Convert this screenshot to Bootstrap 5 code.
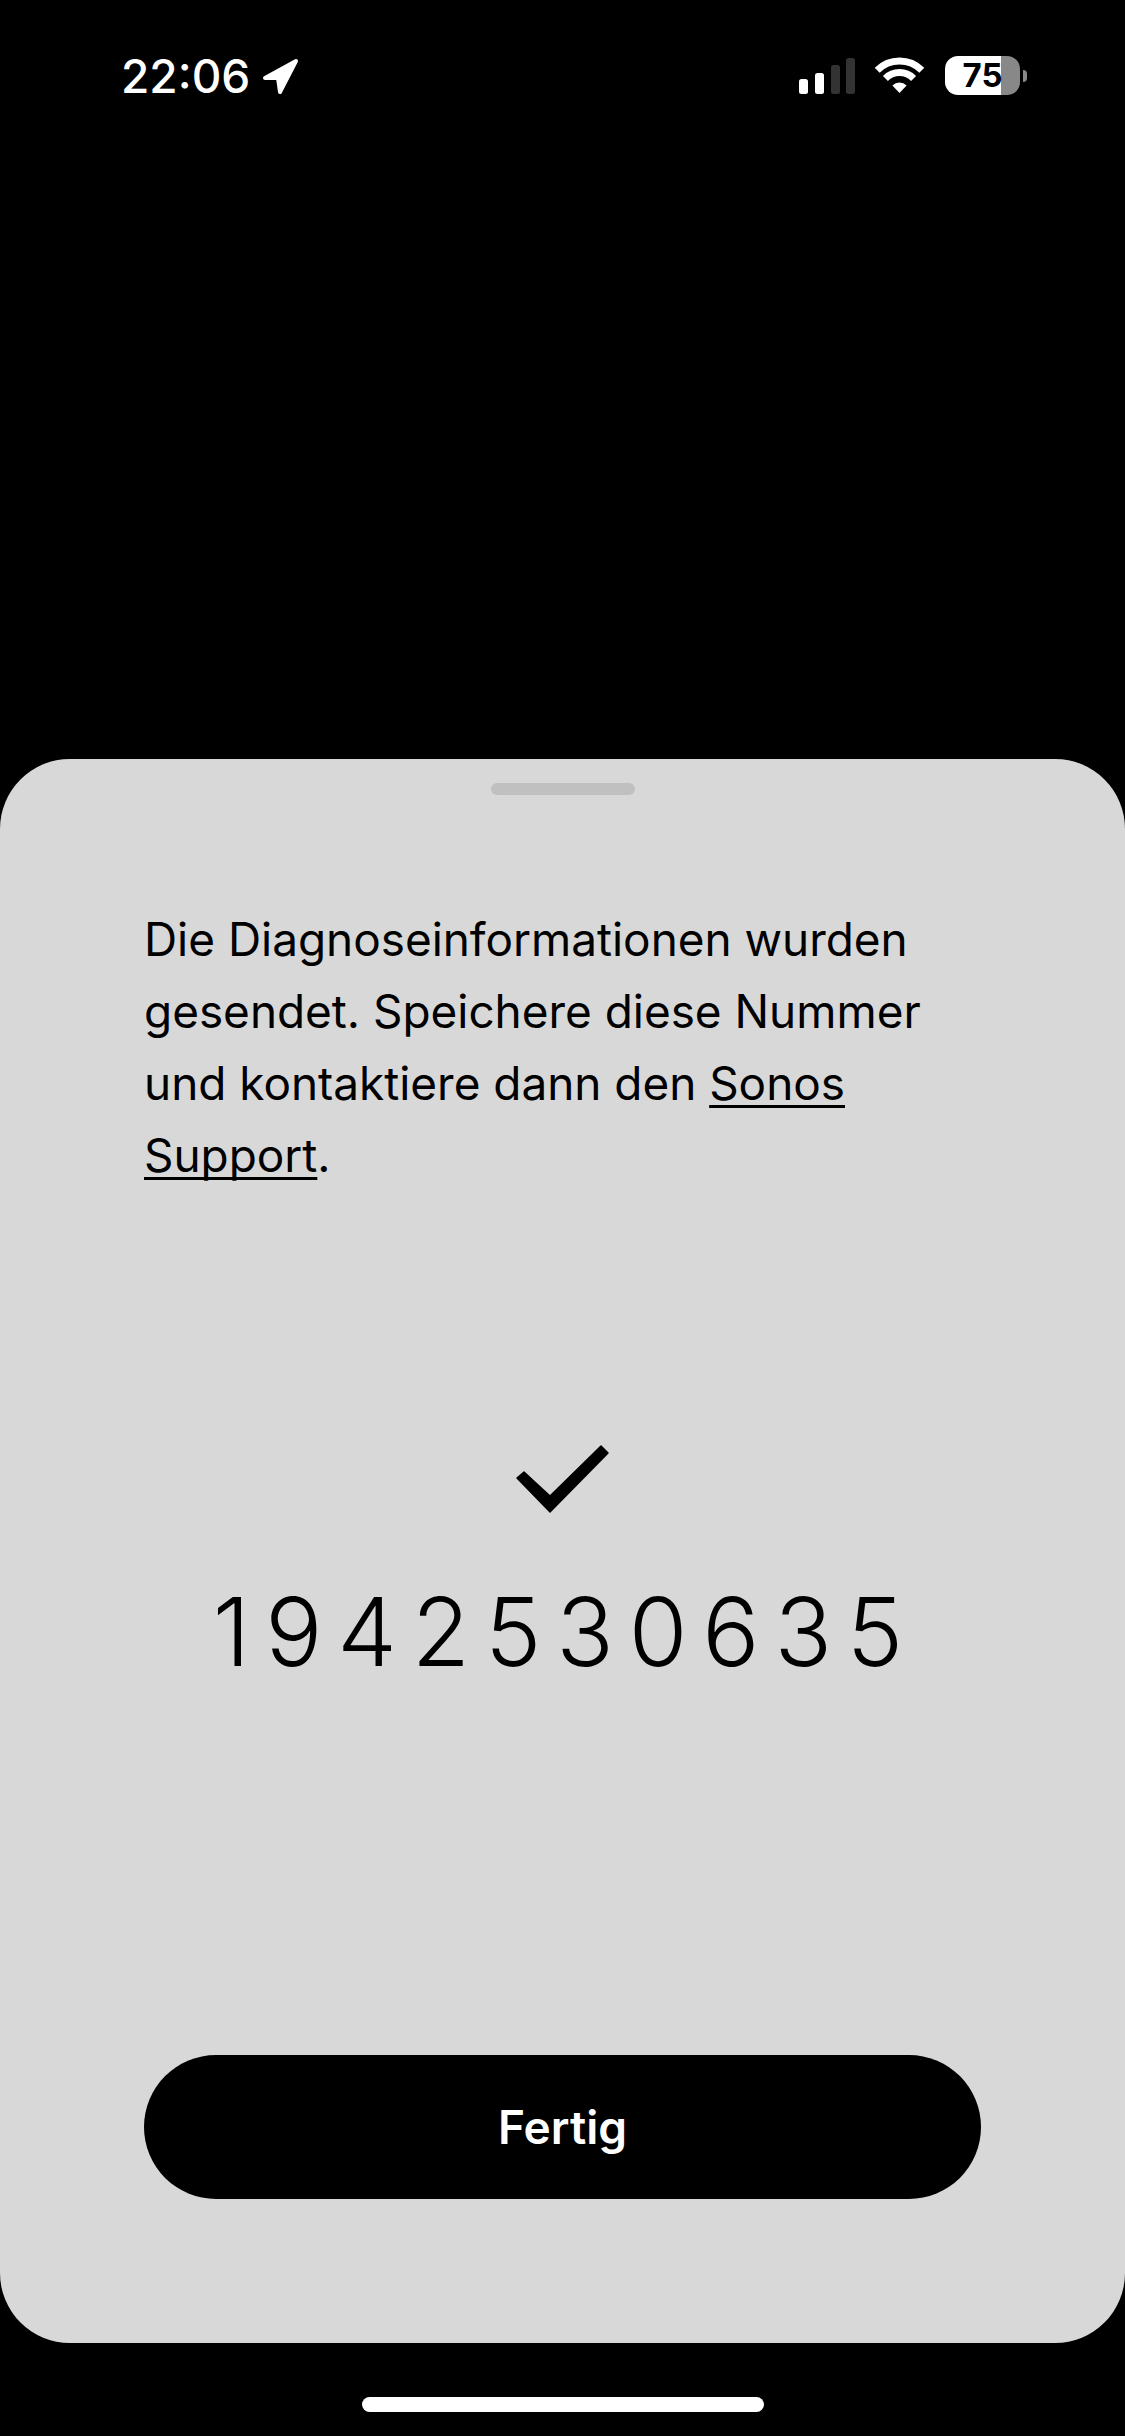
<!DOCTYPE html>
<html lang="de">
<head>
<meta charset="utf-8">
<title>Fertig</title>
<link href="https://cdn.jsdelivr.net/npm/bootstrap@5.3.0/dist/css/bootstrap.min.css" rel="stylesheet">
<style>
html,body{height:2436px;width:1125px;margin:0;overflow:hidden;background:#000;font-family:Inter,"Liberation Sans",sans-serif;}
.screen-wrap{height:2436px;}
.status-row{height:118px;padding:0 98px 0 121px;color:#fff;}
.clock{font-size:46px;font-weight:500;line-height:1;margin-top:53px;}
.loc-ico{margin-left:12px;margin-top:58px;}
.status-right{margin-top:56px;}
.sig-ico{margin-right:18px;margin-top:2px;}
.wifi-ico{margin-right:19px;}
.batt{width:75px;height:39px;border-radius:13px;background:linear-gradient(to right,#fff 0,#fff 56px,#888 56px,#888 100%);color:#000;font-size:33px;font-weight:700;line-height:39px;}
.batt-nub{width:4px;height:12px;background:#888;border-radius:0 6px 6px 0;margin-left:3px;}
.sheet-panel{height:1584px;background:#d8d8d8;border-radius:70px;padding:24px 144px 144px 144px;color:#000;}
.grab{width:144px;height:12px;border-radius:6px;background:#c0c0c0;margin:0 auto 109px;}
.intro{font-size:45.9px;line-height:72px;font-weight:400;margin:0 0 248px;}
.intro a{color:#000;text-decoration:underline;text-decoration-thickness:3px;text-underline-offset:5px;text-decoration-skip-ink:none;}
.tick{display:block;margin:0 auto 56px;}
.code-num{font-size:95px;line-height:112px;letter-spacing:14.9px;font-weight:360;text-align:center;white-space:nowrap;padding-left:6px;}
.done-btn{height:144px;width:837px;border-radius:72px;background:#000;color:#fff;font-size:46px;font-weight:600;border:0;}
.done-btn:hover,.done-btn:active{background:#000!important;color:#fff!important;}
.home-bar{width:402px;height:15px;background:#fff;border-radius:8px;margin:54px auto 24px;}
</style>
</head>
<body>
<div class="screen-wrap d-flex flex-column">
  <div class="status-row d-flex justify-content-between align-items-start">
    <div class="d-flex align-items-start">
      <span class="clock">22:06</span>
      <svg class="loc-ico" width="37" height="37" viewBox="0 0 37 37"><path d="M3 20 L34 3 L18 34 L16 20 Z" fill="#fff" stroke="#fff" stroke-width="4" stroke-linejoin="round"/></svg>
    </div>
    <div class="status-right d-flex align-items-start">
      <svg class="sig-ico" width="57" height="36" viewBox="0 0 57 36"><rect x="0" y="21" width="9" height="15" rx="2.5" fill="#fff"/><rect x="16" y="15" width="9" height="21" rx="2.5" fill="#fff"/><rect x="32" y="7" width="9" height="29" rx="2.5" fill="#333"/><rect x="47" y="0" width="9" height="36" rx="2.5" fill="#333"/></svg>
      <svg class="wifi-ico" width="52" height="38" viewBox="0 0 52 38" fill="none" stroke="#fff" stroke-width="7"><path d="M3.2 14.2A31.5 31.5 0 0 1 47.8 14.2"/><path d="M11.4 22.4A20 20 0 0 1 39.6 22.4"/><path d="M18.4 29.4A10 10 0 0 1 32.6 29.4L25.5 37Z" fill="#fff" stroke="none"/></svg>
      <div class="batt text-center">75</div>
      <div class="batt-nub align-self-center"></div>
    </div>
  </div>
  <div class="flex-grow-1"></div>
  <div class="sheet-panel d-flex flex-column">
    <div class="grab"></div>
    <p class="intro">Die Diagnoseinformationen wurden gesendet. Speichere diese Nummer und kontaktiere dann den <a href="#">Sonos</a> <a href="#">Support</a>.</p>
    <svg class="tick" width="105" height="80" viewBox="0 0 105 80"><path d="M7 38 14 32 40 56 91 6 98 13 40 72Z" fill="#000" stroke="#000" stroke-width="1.5" stroke-linejoin="round"/></svg>
    <div class="code-num">1942530635</div>
    <button class="btn done-btn mt-auto" type="button">Fertig</button>
  </div>
  <div class="home-bar"></div>
</div>
</body>
</html>
